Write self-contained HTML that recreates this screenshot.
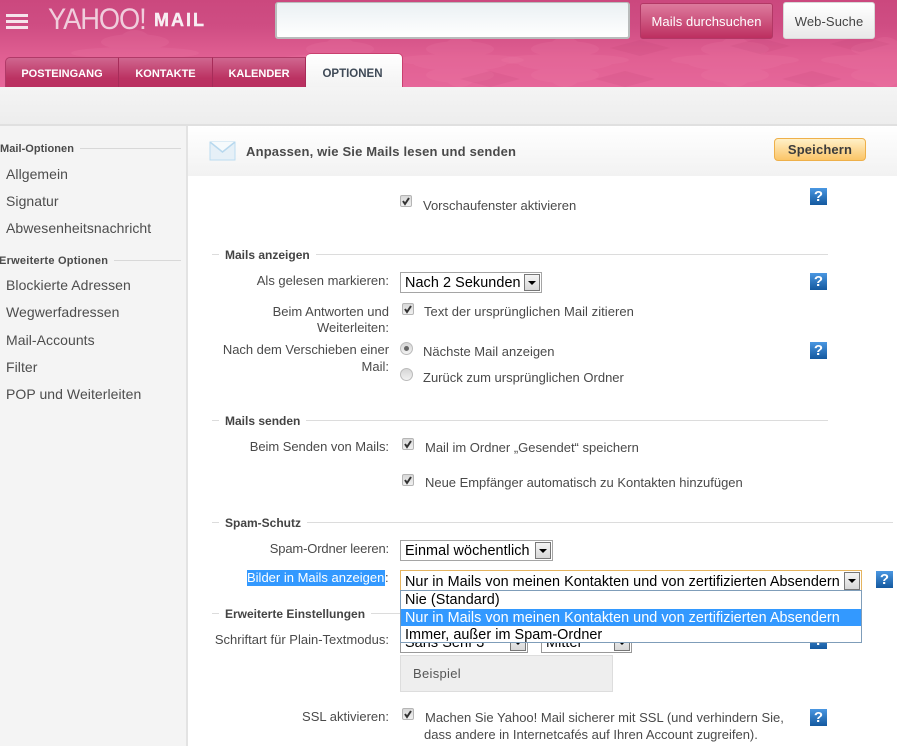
<!DOCTYPE html>
<html lang="de"><head><meta charset="utf-8"><title>Yahoo Mail Optionen</title>
<style>
html,body{margin:0;padding:0;background:#fff}
#p{position:relative;width:897px;height:746px;overflow:hidden;background:#fff;font-family:"Liberation Sans",Arial,sans-serif;font-size:12px;color:#4a4a4a}
#p div{position:absolute;white-space:nowrap}
.t{font-size:13px;line-height:16px;height:16px}
.h{font-size:12px;font-weight:bold;line-height:14px;background:#fff;color:#444;padding:0 6px}
.n{font-size:14px;letter-spacing:.06px;color:#4d4d4d;line-height:18px;left:6px}
.sh{font-size:11px;font-weight:bold;color:#4a4a4a;line-height:14px;background:#f4f4f4;padding-right:6px}
.ln{height:1px;background:#dcdcdc}
.sel{background:#fff;border:1px solid #a5a5a5;box-sizing:border-box;font-size:14.4px;color:#000;line-height:21px;padding-left:4px;letter-spacing:.08px}
.ar{width:16px;background:linear-gradient(#f4f4f4,#d8d8d8);border:1px solid #777;box-sizing:border-box;top:1px;bottom:1px;right:1px}
.ar:after{content:"";position:absolute;left:3px;top:6px;border:4px solid transparent;border-top:4px solid #000;border-bottom:0}
.q{width:17px;height:17px;background:linear-gradient(#4a97e2,#14599f);color:#fff;font-weight:bold;font-size:15px;line-height:17px;text-align:center}
.c{width:12px;height:12px;border-radius:2px;border:1px solid #b5b5b5;box-sizing:border-box;background:linear-gradient(#d8d8d8,#f0f0f0)}
.c svg{position:absolute;left:0;top:0}
.o{width:13px;height:13px;border-radius:50%;border:1px solid #bbb;box-sizing:border-box;background:linear-gradient(#d5d5d5,#f2f2f2)}
.o i{position:absolute;left:3px;top:3px;width:5px;height:5px;border-radius:50%;background:#666}
.tab{top:57px;height:30px;line-height:33px;text-align:center;color:#fff;font-size:11px;font-weight:bold;background:linear-gradient(#d0668f,#bb3262 70%,#b92f60);border-right:1px solid #a72c59;border-top:1px solid #b13a68;box-sizing:border-box}
</style></head><body><div id="p">

<!-- header -->
<div style="left:0;top:0;width:897px;height:87px;background:linear-gradient(#cb487e 0,#cf4d83 30%,#e05f92 65%,#e6679a 100%);overflow:hidden">
 <svg width="897" height="87" style="position:absolute;left:0;top:0" xmlns="http://www.w3.org/2000/svg">
  <defs>
   <g id="fl" fill="#f58ab2" opacity=".14">
    <ellipse cx="0" cy="0" rx="48" ry="9"/><ellipse cx="0" cy="-13" rx="34" ry="8"/><ellipse cx="0" cy="13" rx="34" ry="8"/><ellipse cx="0" cy="0" rx="22" ry="25"/><ellipse cx="0" cy="-2" rx="64" ry="6"/>
   </g>
   <g id="dm" fill="#b93a6f" opacity=".12"><path d="M-30 0L0 -8L30 0L0 8Z"/></g>
  </defs>
  <use href="#fl" x="135" y="55"/><use href="#fl" x="565" y="62"/><use href="#fl" x="735" y="62"/><use href="#fl" x="885" y="62"/><use href="#fl" x="340" y="62"/><use href="#fl" x="460" y="62"/>
  <use href="#dm" x="640" y="48"/><use href="#dm" x="490" y="79"/><use href="#dm" x="625" y="79"/><use href="#dm" x="812" y="79"/><use href="#dm" x="760" y="46"/><use href="#dm" x="860" y="44"/>
 </svg>
 <div style="left:6px;top:14px;width:22px;height:3px;background:#f6e4ec"></div>
 <div style="left:6px;top:20px;width:22px;height:3px;background:#f6e4ec"></div>
 <div style="left:6px;top:26px;width:22px;height:3px;background:#f6e4ec"></div>
 <div style="left:48px;top:3px;font-size:30px;line-height:34px;letter-spacing:-1.2px;color:#f0cddc;transform:scaleX(.91);transform-origin:0 0">YAHOO!</div>
 <div style="left:154px;top:10px;font-size:18px;line-height:21px;font-weight:bold;letter-spacing:2px;color:#f8eef3;-webkit-text-stroke:.4px #f8eef3">MAIL</div>
 <div style="left:275px;top:2px;width:355px;height:37px;box-sizing:border-box;border:1px solid #b9bcbc;border-width:1px 2px 2px 2px;border-radius:3px;background:linear-gradient(#eaf0f3,#fff)"></div>
 <div style="left:640px;top:3px;width:133px;height:36px;box-sizing:border-box;border:1px solid #b23865;border-radius:3px;background:linear-gradient(#dd7a9d,#bd2f60);color:#fff;font-size:13px;letter-spacing:.1px;line-height:35px;text-align:center">Mails durchsuchen</div>
 <div style="left:783px;top:2px;width:92px;height:37px;box-sizing:border-box;border:1px solid #d8d8d8;border-radius:3px;background:linear-gradient(#fff,#e9e9e9);color:#444;font-size:13px;letter-spacing:.1px;line-height:37px;text-align:center">Web-Suche</div>
 <div class="tab" style="left:5px;width:114px;border-radius:5px 0 0 0;border-left:1px solid #b13a68">POSTEINGANG</div>
 <div class="tab" style="left:119px;width:94px">KONTAKTE</div>
 <div class="tab" style="left:213px;width:93px">KALENDER</div>
 <div style="left:306px;top:53px;width:97px;height:34px;box-sizing:border-box;background:linear-gradient(#fff,#f3f3f3);border:1px solid #c9406f;border-width:1px 1px 0 0;border-radius:5px 5px 0 0;color:#3f4a57;font-size:11.5px;font-weight:bold;line-height:40px;text-align:center;padding-right:3px">OPTIONEN</div>
</div>

<!-- toolbar -->
<div style="left:0;top:87px;width:897px;height:38px;background:linear-gradient(#f4f4f4,#ededed)"></div>
<div style="left:0;top:124px;width:897px;height:2px;background:#e0e0e0"></div>

<!-- sidebar -->
<div style="left:0;top:126px;width:186px;height:620px;background:#f4f4f4"></div>
<div style="left:186px;top:126px;width:2px;height:620px;background:#e3e3e3"></div>
<div class="ln" style="left:0;top:148px;width:181px;background:#d8d8d8"></div>
<div class="sh" style="left:0;top:142px;letter-spacing:.05px">Mail-Optionen</div>
<div class="n" style="top:165px">Allgemein</div>
<div class="n" style="top:192px">Signatur</div>
<div class="n" style="top:219px">Abwesenheitsnachricht</div>
<div class="ln" style="left:0;top:260px;width:181px;background:#d8d8d8"></div>
<div class="sh" style="left:-1px;top:254px;letter-spacing:.25px">Erweiterte Optionen</div>
<div class="n" style="top:276px">Blockierte Adressen</div>
<div class="n" style="top:303px">Wegwerfadressen</div>
<div class="n" style="top:331px">Mail-Accounts</div>
<div class="n" style="top:358px">Filter</div>
<div class="n" style="top:385px">POP und Weiterleiten</div>

<!-- title bar -->
<div style="left:188px;top:126px;width:709px;height:50px;background:linear-gradient(#fff,#f2f2f2)"></div>
<svg style="position:absolute;left:209px;top:141px" width="28" height="20" xmlns="http://www.w3.org/2000/svg">
 <path d="M1 1H26V19H1Z" fill="#e6f0f7" stroke="#bcdcf0"/><path d="M1 1L13.5 11L26 1" fill="#f6fafc" stroke="#b7d8ee" stroke-width="1.5"/>
</svg>
<div style="left:246px;top:144px;font-size:13px;font-weight:bold;letter-spacing:.18px;line-height:16px;color:#4a4a4a">Anpassen, wie Sie Mails lesen und senden</div>
<div style="left:774px;top:138px;width:92px;height:23px;box-sizing:border-box;border:1px solid #eeb04a;border-radius:4px;background:linear-gradient(#fff0c8,#fbc568);color:#3c3c3c;font-weight:bold;font-size:13px;letter-spacing:.15px;line-height:22px;text-align:center">Speichern</div>

<!-- Vorschau -->
<div class="c" style="left:400px;top:195px"><svg width="10" height="10"><path d="M2 5L4 8L8 2" fill="none" stroke="#333" stroke-width="2"/></svg></div>
<div class="t" style="left:423px;top:198px">Vorschaufenster aktivieren</div>
<div class="q" style="left:810px;top:188px">?</div>

<!-- Mails anzeigen -->
<div class="ln" style="left:212px;top:254px;width:616px"></div>
<div class="h" style="left:219px;top:248px">Mails anzeigen</div>
<div class="t" style="right:508px;top:273px">Als gelesen markieren:</div>
<div class="sel" style="left:400px;top:272px;width:142px;height:21px">Nach 2 Sekunden<div class="ar"></div></div>
<div class="q" style="left:810px;top:273px">?</div>

<div class="t" style="right:508px;top:304px">Beim Antworten und</div>
<div class="t" style="right:508px;top:320px">Weiterleiten:</div>
<div class="c" style="left:402px;top:303px"><svg width="10" height="10"><path d="M2 5L4 8L8 2" fill="none" stroke="#333" stroke-width="2"/></svg></div>
<div class="t" style="left:424px;top:304px;letter-spacing:.05px">Text der ursprünglichen Mail zitieren</div>

<div class="t" style="right:508px;top:342px;letter-spacing:-.03px">Nach dem Verschieben einer</div>
<div class="t" style="right:508px;top:359px">Mail:</div>
<div class="o" style="left:400px;top:342px"><i></i></div>
<div class="t" style="left:423px;top:344px">Nächste Mail anzeigen</div>
<div class="q" style="left:810px;top:342px">?</div>
<div class="o" style="left:400px;top:368px"></div>
<div class="t" style="left:423px;top:370px">Zurück zum ursprünglichen Ordner</div>

<!-- Mails senden -->
<div class="ln" style="left:212px;top:420px;width:616px"></div>
<div class="h" style="left:219px;top:414px">Mails senden</div>
<div class="t" style="right:508px;top:439px;letter-spacing:-.04px">Beim Senden von Mails:</div>
<div class="c" style="left:402px;top:438px"><svg width="10" height="10"><path d="M2 5L4 8L8 2" fill="none" stroke="#333" stroke-width="2"/></svg></div>
<div class="t" style="left:425px;top:440px">Mail im Ordner „Gesendet“ speichern</div>
<div class="c" style="left:402px;top:474px"><svg width="10" height="10"><path d="M2 5L4 8L8 2" fill="none" stroke="#333" stroke-width="2"/></svg></div>
<div class="t" style="left:425px;top:475px;letter-spacing:-.02px">Neue Empfänger automatisch zu Kontakten hinzufügen</div>

<!-- Spam -->
<div class="ln" style="left:212px;top:522px;width:681px"></div>
<div class="h" style="left:219px;top:516px">Spam-Schutz</div>
<div class="t" style="right:508px;top:541px;letter-spacing:-.15px">Spam-Ordner leeren:</div>
<div class="sel" style="left:400px;top:540px;width:153px;height:21px">Einmal wöchentlich<div class="ar"></div></div>
<div class="t" style="left:247px;width:138px;top:570px;color:#fff;background:#3399ff">Bilder in Mails anzeigen</div>
<div class="t" style="left:385px;top:570px">:</div>

<!-- Erweiterte -->
<div class="ln" style="left:212px;top:613px;width:190px"></div>
<div class="h" style="left:219px;top:607px">Erweiterte Einstellungen</div>
<div class="t" style="right:508px;top:632px">Schriftart für Plain-Textmodus:</div>
<div class="sel" style="left:400px;top:632px;width:128px;height:21px;border-color:#999">Sans Serif 3<div class="ar"></div></div>
<div class="sel" style="left:541px;top:632px;width:91px;height:21px;border-color:#999">Mittel<div class="ar"></div></div>
<div class="q" style="left:810px;top:632px">?</div>
<div style="left:400px;top:655px;width:213px;height:37px;box-sizing:border-box;background:#eee;border:1px solid #ddd;font-size:13px;letter-spacing:.3px;line-height:35px;padding-left:12px;color:#555">Beispiel</div>

<div class="t" style="right:508px;top:709px">SSL aktivieren:</div>
<div class="c" style="left:402px;top:708px"><svg width="10" height="10"><path d="M2 5L4 8L8 2" fill="none" stroke="#333" stroke-width="2"/></svg></div>
<div class="t" style="left:425px;top:710px">Machen Sie Yahoo! Mail sicherer mit SSL (und verhindern Sie,</div>
<div class="t" style="left:424px;top:727px">dass andere in Internetcafés auf Ihren Account zugreifen).</div>
<div class="q" style="left:810px;top:709px">?</div>

<!-- open select -->
<div class="sel" style="left:400px;top:570px;width:462px;height:21px;border:1px solid #e5b45f;border-bottom:0;letter-spacing:.03px;line-height:22px">Nur in Mails von meinen Kontakten und von zertifizierten Absendern<div class="ar" style="top:1px;bottom:1px"></div></div>
<div style="left:400px;top:590px;width:462px;height:53px;box-sizing:border-box;background:#fff;border:1px solid #7f9db9;font-size:14.4px;line-height:19px;color:#000">
 <div style="left:0;top:0;width:460px;height:18px;padding-left:4px;box-sizing:border-box;letter-spacing:.08px">Nie (Standard)</div>
 <div style="left:0;top:18px;width:460px;height:17px;padding-left:4px;box-sizing:border-box;background:#3399ff;color:#fff;letter-spacing:.03px">Nur in Mails von meinen Kontakten und von zertifizierten Absendern</div>
 <div style="left:0;top:35px;width:460px;height:17px;padding-left:4px;box-sizing:border-box;letter-spacing:.05px">Immer, außer im Spam-Ordner</div>
</div>
<div class="q" style="left:876px;top:571px">?</div>

</div></body></html>
